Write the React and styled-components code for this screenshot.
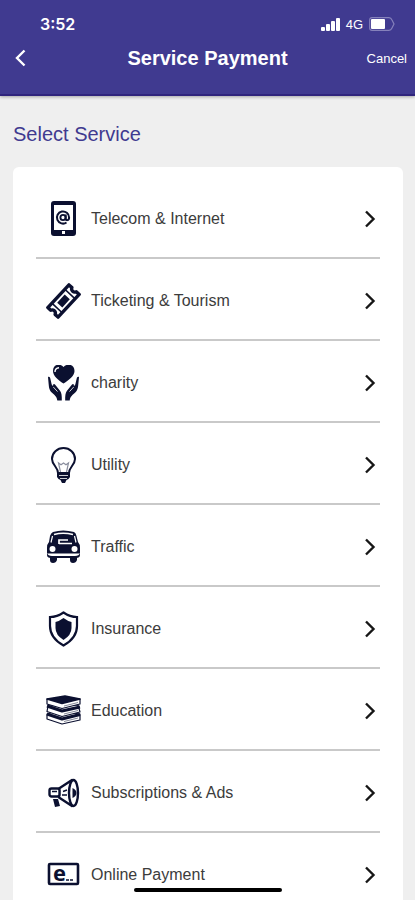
import { useState } from 'react';
import styled, { createGlobalStyle } from 'styled-components'

const GlobalStyle = createGlobalStyle`
*{
  box-sizing:border-box;
}
body{
  margin:0;
  background-color:#efefef;
  font-family:"Liberation Sans", Arial, sans-serif;
}
`;
const Screen = styled.div`
display:flex;
flex-direction:column;
height:100vh;
overflow:hidden;
`;
const Header = styled.header`
display:flex;
flex-direction:column;
flex-shrink:0;
padding-bottom:22px;
background-color:#403a90;
color:white;
border-bottom:2px solid #30257d;
box-shadow:0 1px 3px rgba(0,0,0,0.3);
z-index:1;
`;
const StatusBar = styled.div`
display:flex;
align-items:center;
justify-content:space-between;
height:44px;
padding:4px 20px 0 40px;
`;
const Clock = styled.span`
font-family:Inter, "Liberation Sans", sans-serif;
font-size:16px;
font-weight:600;
`;
const Indicators = styled.div`
display:flex;
align-items:center;
gap:6px;
font-size:13px;
`;
const NavBar = styled.div`
display:grid;
grid-template-columns:1fr auto 1fr;
align-items:center;
height:28px;
padding:0 8px;
`;
const Title = styled.h1`
margin:0;
font-size:20px;
line-height:28px;
`;
const NavButton = styled.button`
display:flex;
align-items:center;
justify-self:${(props) => props.$side};
height:28px;
padding:${(props) => (props.$side === "start" ? "0 6px" : "0")};
border:none;
background:none;
color:white;
font-family:inherit;
font-size:13px;
cursor:pointer;
`;
const Content = styled.main`
flex:1;
min-height:0;
padding:26px 12px 40px 13px;
overflow-y:auto;
scrollbar-width:none;
`;
const Heading = styled.h2`
margin:0 0 21px;
color:#403a90;
font-size:20px;
font-weight:normal;
line-height:24px;
`;
const Card = styled.ul`
margin:0;
padding:10px 23px;
list-style:none;
background-color:white;
border-radius:6px;
`;
const ServiceItem = styled.li`
height:82px;
border-bottom:2px solid #c9c9c9;

&:last-child{
  border-bottom:none;
}
`;
const ServiceButton = styled.button`
display:flex;
align-items:center;
gap:10px;
width:100%;
height:80px;
padding:4px 4px 0 9px;
border:none;
background:none;
color:#3c3c3c;
font-family:inherit;
font-size:16px;
text-align:left;
cursor:pointer;
`;
const Label = styled.span`
flex:1;
`;
const HomeIndicator = styled.div`
position:fixed;
bottom:8px;
left:50%;
width:148px;
height:4px;
border-radius:2px;
background-color:black;
transform:translateX(-50%);
z-index:2;
`;
const Icon = styled.svg`
display:block;
flex-shrink:0;
width:36px;
height:36px;
`;

const ink = "#0b1030";

const TelecomIcon = () => (
  <Icon viewBox="0 0 36 36">
    <rect x="6" y="0" width="25" height="35" rx="3" fill={ink} />
    <rect x="9" y="4" width="19" height="25" fill="white" />
    <rect x="17" y="30" width="3" height="3" fill="white" />
    <g fill="none" stroke={ink}>
      <circle cx="18" cy="16.500" r="2.6" strokeWidth="1.9" />
      <path d="M20.7 13.500v4.200c0 2.200 3.400 2 3.400-1.200a6.100 6.100 0 1 0-2.600 5" strokeWidth="2" />
    </g>
  </Icon>
)

const TicketIcon = () => (
  <Icon viewBox="0 0 36 36">
    <g transform="rotate(-47 18.5 18)">
      <path d="M3 11h31v4a3.200 3.200 0 0 0 0 6v4H3v-4a3.200 3.200 0 0 0 0-6z" fill="white" stroke={ink} strokeWidth="3.4" strokeLinejoin="round" />
      <path d="M9 11v14M28 11v14" stroke={ink} strokeWidth="1.6" />
      <rect x="13" y="14.500" width="11" height="7" fill={ink} />
    </g>
  </Icon>
)

const CharityIcon = () => (
  <Icon viewBox="0 0 36 36">
    <path d="M18.500 18.500C13 15 8 11 8 6C8-1 15-2 18.500 2C22-2 29.500-1 29.500 6C29.500 11 24 15 18.500 18.500z" fill={ink} />
    <path d="M10 7c0-2.500 1.500-4 4-4.200" fill="none" stroke="white" strokeWidth="1.4" />
    <path d="M3 12c1.400-.8 2 .3 2.300 1.500l1.400 6 1.500 2c-.7-2.500 1-3 2-1.700l5 6.200c1.200 1.800 1.800 4.500 1.600 9.500h-4.500c-.5-4-3-5.500-5.300-7.700C4 25 4 22 3.700 19.500z" fill={ink} />
    <path d="M34 12c-1.400-.8-2 .3-2.300 1.500l-1.400 6-1.500 2c.7-2.500-1-3-2-1.700l-5 6.200c-1.200 1.800-1.800 4.500-1.600 9.500h4.500c.5-4 3-5.500 5.300-7.700C33 25 33 22 33.300 19.500z" fill={ink} />
    <path d="M8.300 22l4.200 4.600M28.700 22l-4.200 4.600" stroke="white" strokeWidth=".8" />
  </Icon>
)

const BulbIcon = () => (
  <Icon viewBox="0 0 36 36">
    <path d="M13 26c0-6-6-8-6-14a11.500 11 0 0 1 23 0c0 6-6 8-6 14z" fill="white" stroke={ink} strokeWidth="2" />
    <path d="M15.500 25l-2-9 2.500 1.800 2.500-1.800 2.500 1.800 2.500-1.800-2 9" fill="none" stroke="#8a8e9e" strokeWidth="1.2" />
    <path d="M12 26h13v4l-1.500 2-2 1-1.500 3h-3l-1.500-3-2-1-1.500-2z" fill={ink} />
    <path d="M14 28.500h9M15 31.500h7" stroke="white" strokeWidth=".8" />
  </Icon>
)

const CarIcon = () => (
  <Icon viewBox="0 0 36 36">
    <path d="M8 3Q18 0 29 3Q31 4 31.500 7L33 13Q35 15 35 19v7H2v-7q0-4 2-6l1-6q1-3 3-4z" fill={ink} />
    <path d="M9 5.500Q18 3 28 5.500" fill="none" stroke="white" strokeWidth="1.6" />
    <path d="M14 15v-4h9M14 14.500h13" fill="none" stroke="white" strokeWidth="1.7" />
    <path d="M6 13.500L7.500 7M31 13.500L29.500 7" stroke="white" strokeWidth="1.2" />
    <circle cx="7.500" cy="20" r="3" fill="white" />
    <circle cx="29.500" cy="20" r="3" fill="white" />
    <path d="M2 24.500h33v3H2z" fill="white" />
    <path d="M2 24q1 3 5 3h23q4 0 5-3v2q0 3-4 3H6q-4 0-4-3z" fill={ink} />
    <path d="M5 28h7v3q-1 3-4 3t-3-3zM25 28h7v3q-1 3-4 3t-3-3z" fill={ink} />
  </Icon>
)

const ShieldIcon = () => (
  <Icon viewBox="0 0 36 36">
    <path d="M18.500 1.500Q25 6 32 6V15Q32 27 18.500 34.500Q5 27 5 15V6Q12 6 18.500 1.500z" fill="white" stroke={ink} strokeWidth="2.2" />
    <path d="M18.500 7q4 3 8 4v6q0 7-8 12q-8-5-8-12v-6q4-1 8-4z" fill={ink} />
  </Icon>
)

const BooksIcon = () => (
  <Icon viewBox="0 0 36 36">
    <g stroke={ink} strokeLinejoin="round">
      <path d="M2 21l10-3 23 3v6l-18 4-15-5z" fill="white" strokeWidth="1.2" />
      <path d="M2 21l15 5L35 21.500" fill="none" strokeWidth="3" />
      <path d="M3 13l30-1 2 7-18 4.500L2 18.500z" fill="white" strokeWidth="1.2" />
      <path d="M2 13l15 5L35 14" fill="none" strokeWidth="3" />
      <path d="M2 6v5l15 4.500L35 11V6z" fill="white" strokeWidth="1.2" />
      <path d="M2 6L20 3l15 3-18 4.500z" fill={ink} strokeWidth="1.6" />
      <path d="M19 13l14-3.500M19 21l14-3.500M19 28.500l14-3.500" fill="none" strokeWidth=".5" />
    </g>
  </Icon>
)

const MegaphoneIcon = () => (
  <Icon viewBox="0 0 36 36">
    <g fill="white" stroke={ink} strokeWidth="2.4" strokeLinejoin="round">
      <path d="M14 13.500L27 5v26L14 22.500z" />
      <rect x="4.500" y="13.500" width="10" height="8" rx="2" />
      <ellipse cx="28.500" cy="18" rx="4.500" ry="13" />
    </g>
    <path d="M27.500 13q4 2 4 5t-4 5z" fill={ink} />
    <path d="M7 16.500h5M18 16.500l4-1.500M17 20h5" stroke={ink} strokeWidth="1.5" />
    <path d="M8 24h5l2 7-5 1z" fill={ink} />
  </Icon>
)

const OnlineText = styled.text`
font-family:"Open Sans", sans-serif;
font-size:22px;
font-weight:bold;
`;

const OnlineIcon = () => (
  <Icon viewBox="0 0 36 36">
    <rect x="4" y="7" width="29" height="20" rx="1" fill="white" stroke={ink} strokeWidth="2.6" />
    <OnlineText x="8" y="24" fill={ink}>e</OnlineText>
    <path d="M21 23h3M25 23h3" stroke={ink} strokeWidth="1.6" />
  </Icon>
)

const SignalIcon = () => (
  <svg width="19" height="13" viewBox="0 0 19 13" fill="white" aria-hidden="true">
    <rect x="0" y="9" width="4" height="4" rx="1" />
    <rect x="5" y="6" width="4" height="7" rx="1" />
    <rect x="10" y="3" width="4" height="10" rx="1" />
    <rect x="15" y="0" width="4" height="13" rx="1" />
  </svg>
)

const BatteryIcon = () => (
  <svg width="26" height="14" viewBox="0 0 26 14" aria-hidden="true">
    <path d="M3 .7h17q2 0 3 2.300l2 4-2 4q-1 2.300-3 2.300H3Q.7 13.300.7 11V3Q.7.700 3 .700z" fill="none" stroke="#8581bb" strokeWidth="1.2" />
    <rect x="2" y="2" width="14" height="10" rx="1" fill="white" />
  </svg>
)

const services = [
  { name: "Telecom & Internet", icon: TelecomIcon },
  { name: "Ticketing & Tourism", icon: TicketIcon },
  { name: "charity", icon: CharityIcon },
  { name: "Utility", icon: BulbIcon },
  { name: "Traffic", icon: CarIcon },
  { name: "Insurance", icon: ShieldIcon },
  { name: "Education", icon: BooksIcon },
  { name: "Subscriptions & Ads", icon: MegaphoneIcon },
  { name: "Online Payment", icon: OnlineIcon },
]

function App() {
  const [selectedService, onServiceSelect] = useState();

  return (
    <>
      <GlobalStyle />
      <Screen>
        <Header>
          <StatusBar>
            <Clock>3:52</Clock>
            <Indicators>
              <SignalIcon />
              <span>4G</span>
              <BatteryIcon />
            </Indicators>
          </StatusBar>
          <NavBar>
            <NavButton $side="start" aria-label="Back">
              <svg width="12" height="18" viewBox="0 0 12 18" fill="none" stroke="white" strokeWidth="2.4">
                <path d="M10.500 1.500L3 9l7.500 7.500" />
              </svg>
            </NavButton>
            <Title>Service Payment</Title>
            <NavButton $side="end">Cancel</NavButton>
          </NavBar>
        </Header>

        <Content>
          <Heading>Select Service</Heading>
          <Card>
            {services.map(({ name, icon: ServiceIcon }) => (
              <ServiceItem key={name}>
                <ServiceButton aria-pressed={selectedService === name} onClick={() => onServiceSelect(name)}>
                  <ServiceIcon />
                  <Label>{name}</Label>
                  <svg width="12" height="18" viewBox="0 0 12 18" fill="none" stroke="#161616" strokeWidth="2.4">
                    <path d="M2 1.500L9.500 9L2 16.500" />
                  </svg>
                </ServiceButton>
              </ServiceItem>
            ))}
          </Card>
        </Content>
        <HomeIndicator />
      </Screen>
    </>
  );
}

export default App;
